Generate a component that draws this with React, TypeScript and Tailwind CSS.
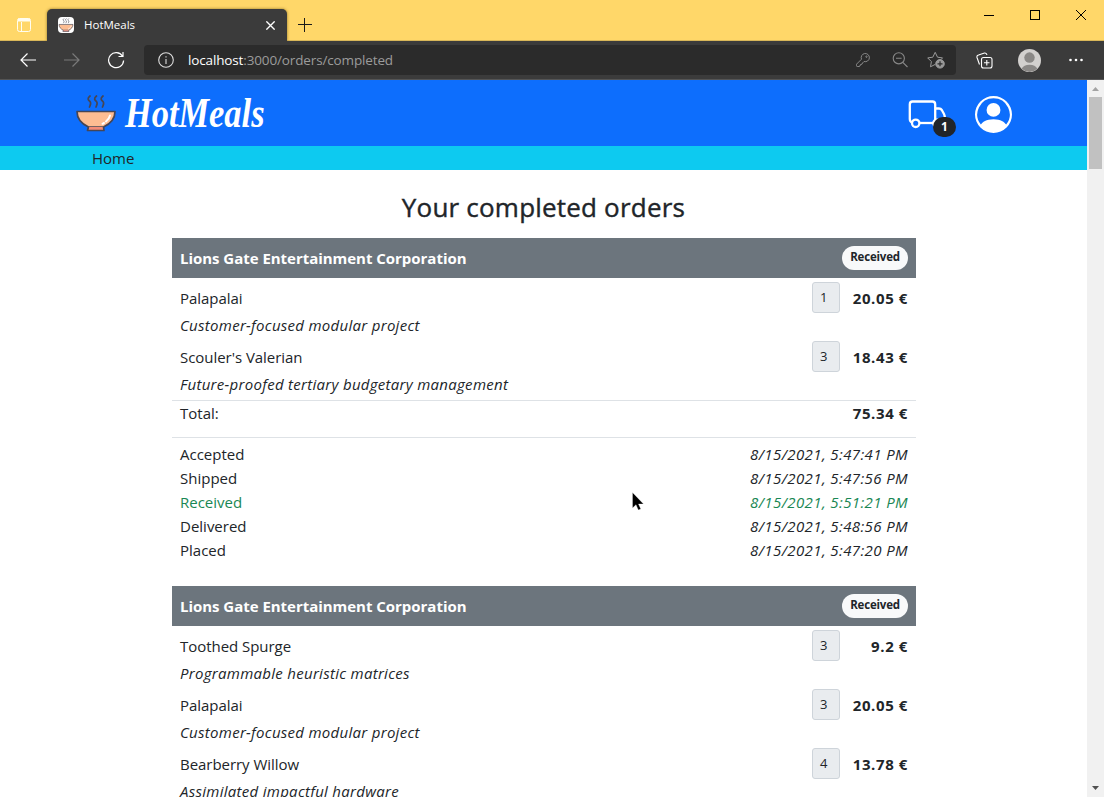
import React from "react";
import { BsPersonCircle } from "react-icons/bs";

type Item = { name: string; desc: string; qty: number; price: string };
type Step = { label: string; time: string; active?: boolean };
type Order = { items: Item[]; total?: string; steps?: Step[] };

const orders: Order[] = [
  {
    items: [
      { name: "Palapalai", desc: "Customer-focused modular project", qty: 1, price: "20.05 €" },
      { name: "Scouler's Valerian", desc: "Future-proofed tertiary budgetary management", qty: 3, price: "18.43 €" },
    ],
    total: "75.34 €",
    steps: [
      { label: "Accepted", time: "8/15/2021, 5:47:41 PM" },
      { label: "Shipped", time: "8/15/2021, 5:47:56 PM" },
      { label: "Received", time: "8/15/2021, 5:51:21 PM", active: true },
      { label: "Delivered", time: "8/15/2021, 5:48:56 PM" },
      { label: "Placed", time: "8/15/2021, 5:47:20 PM" },
    ],
  },
  {
    items: [
      { name: "Toothed Spurge", desc: "Programmable heuristic matrices", qty: 3, price: "9.2 €" },
      { name: "Palapalai", desc: "Customer-focused modular project", qty: 3, price: "20.05 €" },
      { name: "Bearberry Willow", desc: "Assimilated impactful hardware", qty: 4, price: "13.78 €" },
    ],
  },
];

function Bowl({ className }: { className: string }) {
  return (
    <svg viewBox="0 0 40 38" className={className} fill="none" stroke="#464655" strokeWidth="1.7" strokeLinejoin="round">
      <path d="M14 2c-3 2.500-2 4 0 5.500 1.500 1.500.5 3-.5 5.500M20.500 2c-3 2.500-2 4 0 5.500 1.500 1.500.5 3-.5 5.500M27 2c-3 2.500-2 4 0 5.500 1.500 1.500.5 3-.5 5.500" strokeLinecap="round" />
      <path d="M1 17.500h38c0 7-5 12.500-11.500 15.500H12.500C6 30 1 24.500 1 17.500Z" fill="#fdbd92" />
      <path d="M12.500 33l-1 3.500h16.500L27.500 33" fill="#f48c76" />
      <path d="M34 21.500c-.800 3-2 4.500-4 6M28 29l-1.500.8" stroke="#fff" strokeWidth="2" strokeLinecap="round" />
    </svg>
  );
}

function Truck({ className }: { className: string }) {
  return (
    <svg viewBox="0 0 38 36" className={className} fill="none" stroke="#fff" strokeWidth="2.300" strokeLinejoin="round">
      <path d="M4 27.500Q1.800 26.500 1.800 24V9.500Q1.800 6.500 4.500 6.500H24.500Q27.200 6.500 27.200 9.500V28.500" />
      <path d="M27.200 13.500H31Q32.800 13.500 33.800 15L36 19Q36.800 20.500 36.800 23V26Q36.800 28 34 28" />
      <path d="M12 28H27" />
      <circle cx="7.700" cy="28.300" r="3.700" />
      <circle cx="29" cy="28.300" r="3.700" />
    </svg>
  );
}

function TabStrip() {
  return (
    <div className="flex h-[41px] shrink-0 items-end border-b border-[#d9b759] bg-[#ffd769]">
      <svg viewBox="0 0 14 14" className="mb-[8px] ml-[17px] h-[14px] w-[14px]" fill="none" stroke="#fffdf0">
        <rect x=".5" y=".5" width="13" height="13" rx="2" />
        <path d="M4.500 4v9.500" />
        <path d="M1 2h12" strokeWidth="3" />
      </svg>
      <div className="-mb-px ml-4 flex h-8 w-[240px] items-center rounded-t-[5px] bg-[#3b3b3b] pl-[11px] shadow-[0_0_3px_rgba(90,70,10,0.7)]">
        <span className="flex h-4 w-4 items-center justify-center rounded bg-white">
          <Bowl className="h-[14px] w-4" />
        </span>
        <span className="ml-[10px] text-[11.5px] text-white">HotMeals</span>
        <svg viewBox="0 0 8 8" className="ml-auto mr-[12px] h-[9px] w-[9px]" stroke="#fff" strokeWidth="1.200">
          <path d="M.3.3l7.400 7.400M7.700.3.3 7.700" />
        </svg>
      </div>
      <svg viewBox="0 0 14 14" className="mb-[8px] ml-[11px] h-[14px] w-[14px]" stroke="#1a1a1a" shapeRendering="crispEdges">
        <path d="M0 6.500h14M6.500 0v14" />
      </svg>
      <div className="mb-[20px] ml-auto flex items-center pr-[18px]">
        <svg viewBox="0 0 10 10" className="mr-[36px] h-[10px] w-[10px]" stroke="#000" shapeRendering="crispEdges">
          <path d="M0 5.500h10" />
        </svg>
        <svg viewBox="0 0 10 10" className="mr-[36px] h-[10px] w-[10px]" fill="none" stroke="#000" shapeRendering="crispEdges">
          <rect x=".5" y=".5" width="9" height="9" />
        </svg>
        <svg viewBox="0 0 10 10" className="h-[10px] w-[10px]" stroke="#000">
          <path d="M0 0l10 10M10 0L0 10" />
        </svg>
      </div>
    </div>
  );
}

function Toolbar() {
  return (
    <div className="flex h-[39px] shrink-0 items-center border-b border-[#555] bg-[#3b3b3b] pl-5">
      <svg viewBox="0 0 16 14" className="h-[14px] w-4" fill="none" stroke="#fff" strokeWidth="1.200">
        <path d="M16 7H1M7.500.5 1 7l6.500 6.500" />
      </svg>
      <svg viewBox="0 0 16 14" className="ml-7 h-[14px] w-4" fill="none" stroke="#7a7a7a" strokeWidth="1.200">
        <path d="M0 7h15M8.500.5 15 7l-6.500 6.500" />
      </svg>
      <svg viewBox="0 0 18 18" className="ml-[27px] h-[18px] w-[18px]" fill="none" stroke="#fff" strokeWidth="1.200">
        <path d="M15.500 5.200A7.500 7.500 0 1 0 16.600 9.500M16 1v4.500h-4.500" />
      </svg>
      <div className="ml-[19px] flex h-[30px] w-[812px] items-center rounded bg-[#2b2b2b] pl-[14px] pr-[11px]">
        <svg viewBox="0 0 16 16" className="h-4 w-4" fill="none" stroke="#ddd" strokeWidth="1.100">
          <circle cx="8" cy="8" r="7.300" />
          <path d="M8 7v5M8 4.200v1.400" />
        </svg>
        <span className="ml-[14px] text-[13.500px] tracking-[-0.14px] text-[#9b9b9b]">
          <span className="text-white">localhost</span>:3000/orders/completed
        </span>
        <svg viewBox="0 0 14 14" className="ml-auto h-[14px] w-[14px]" fill="none" stroke="#888" strokeLinejoin="round">
          <path d="M5.500 6.200A4.100 4.100 0 1 1 8 8.500L6.500 10 6 11.200 4.500 11.500 4 13 3 13.500H1.200Q.5 13.500.5 12.700V11.200Z" />
          <circle cx="10.500" cy="3.700" r=".7" />
        </svg>
        <svg viewBox="0 0 16 16" className="ml-[22px] h-4 w-4" fill="none" stroke="#888" strokeWidth="1.100">
          <circle cx="6.800" cy="6.300" r="5.600" />
          <path d="M4 6.300h5.600M10.800 10.300l4.700 4.700" />
        </svg>
        <svg viewBox="0 0 18 18" className="ml-[19px] h-[18px] w-[18px]" fill="none" stroke="#999" strokeLinejoin="round">
          <path d="M8 13.500l-4.500 2.300.9-5.200L.7 6.900l5.100-.7L8.200 1.300l2.300 4.900 5.100.7-1 1" />
          <circle cx="13" cy="12.800" r="4.300" fill="#999" />
          <path d="M10.500 12.800h5M13 10.300v5" stroke="#2b2b2b" strokeWidth="1.200" />
        </svg>
      </div>
      <svg viewBox="0 0 17 17" className="ml-5 h-[17px] w-[17px]" fill="none" stroke="#fff" strokeWidth="1.100">
        <path d="M3.500 12.500 1 5.500Q.5 3.500 2.500 3L8.500 1Q10.500.6 11 3" />
        <rect x="5.500" y="5.500" width="10.500" height="10.500" rx="2" />
        <path d="M8 10.800h5.500M10.800 8v5.500" />
      </svg>
      <svg viewBox="0 0 22 22" className="ml-[25px] h-[23px] w-[23px]">
        <circle cx="11" cy="11" r="11" fill="#d2d0ce" />
        <circle cx="11" cy="8.200" r="5" fill="#8a8886" />
        <path d="M3.500 19a8 6 0 0 1 15 0A11 11 0 0 1 3.500 19Z" fill="#8a8886" />
      </svg>
      <svg viewBox="0 0 14 4" className="ml-[28px] h-1 w-[14px]" fill="#fff">
        <circle cx="1.500" cy="2" r="1.300" />
        <circle cx="7" cy="2" r="1.300" />
        <circle cx="12.500" cy="2" r="1.300" />
      </svg>
    </div>
  );
}

function OrderCard({ order }: { order: Order }) {
  return (
    <section className="mb-6 w-[744px]">
      <header className="flex h-10 items-center justify-between bg-[#6c757d] px-2">
        <span className="text-[15px] font-bold tracking-[-0.03px] text-white">Lions Gate Entertainment Corporation</span>
        <span className="flex h-6 w-[66px] items-center justify-center rounded-full bg-[#f8f9fa] pb-0.5 text-[11.500px] font-bold tracking-[-0.2px]">
          Received
        </span>
      </header>
      {order.items.map((it, i) => (
        <div key={i} className="px-2 pt-1">
          <div className="flex h-[31px] items-center">
            <span className="pt-0.5 tracking-[-0.04px]">{it.name}</span>
            <span className="ml-auto flex h-[31px] w-7 items-center rounded-[3px] border border-[#ced4da] bg-[#e9ecef] pl-[7px] text-[13px]">
              {it.qty}
            </span>
            <span className="w-[68px] pt-0.5 text-right font-bold tracking-[0.600px]">{it.price}</span>
          </div>
          <p className="h-6 leading-6 tracking-[0.290px] italic">{it.desc}</p>
        </div>
      ))}
      {order.total && (
        <div className="mt-1 flex h-[37px] justify-between border-t border-[#dee2e6] px-2 leading-6">
          <span>Total:</span>
          <span className="font-bold tracking-[0.600px]">{order.total}</span>
        </div>
      )}
      {order.steps && (
        <div className="border-t border-[#dee2e6] px-2 pt-1">
          {order.steps.map((s) => (
            <div key={s.label} className={s.active ? "flex h-6 items-center justify-between text-[#198754]" : "flex h-6 items-center justify-between"}>
              <span>{s.label}</span>
              <span className="tracking-[0.390px] italic">{s.time}</span>
            </div>
          ))}
        </div>
      )}
    </section>
  );
}

export default function App() {
  return (
    <div className="relative flex h-[797px] w-[1104px] flex-col overflow-hidden bg-white font-['Open_Sans','Noto_Sans',sans-serif] text-[#212529]">
      <TabStrip />
      <Toolbar />
      <div className="flex min-h-0 flex-1">
        <main className="w-[1087px] overflow-hidden">
          <div className="flex h-[66px] items-center bg-[#0d6efd] pl-[76px] pr-[75px]">
            <Bowl className="h-[38px] w-10" />
            <span className="ml-[9px] w-[180px] origin-left scale-x-[0.8] whitespace-nowrap font-['Liberation_Serif',serif] text-[43px] leading-9 font-bold text-white italic">
              HotMeals
            </span>
            <div className="relative ml-auto h-9 w-[38px]">
              <Truck className="h-9 w-[38px]" />
              <span className="absolute top-[22px] left-[25px] flex h-5 w-[23px] items-center justify-center rounded-full bg-[#212529] text-[12px] font-bold text-white">
                1
              </span>
            </div>
            <BsPersonCircle className="mt-0.5 ml-[29px] h-[37px] w-[37px] text-white" />
          </div>
          <nav className="h-6 bg-[#0dcaf0] pl-[92px] text-[15px] leading-6">Home</nav>
          <h1 className="mt-[19px] mb-[13px] h-9 text-center text-[26px] leading-9 font-medium tracking-[0.200px] [-webkit-text-stroke:0.400px_#212529]">
            Your completed orders
          </h1>
          <div className="ml-[172px] text-[15px]">
            {orders.map((o, i) => (
              <OrderCard key={i} order={o} />
            ))}
          </div>
        </main>
        <div className="flex w-[17px] flex-col items-center bg-[#f1f1f1]">
          <svg viewBox="0 0 17 17" className="h-[17px] w-[17px]" fill="#a3a3a3">
            <path d="M5 11h7L8.500 7Z" />
          </svg>
          <div className="h-[72px] w-[13px] bg-[#c1c1c1]" />
          <svg viewBox="0 0 17 17" className="mt-auto h-[17px] w-[17px]" fill="#505050">
            <path d="M5 6h7l-3.500 4Z" />
          </svg>
        </div>
      </div>
      <svg viewBox="0 0 12 19" className="absolute top-[492px] left-[632px] h-[19px] w-3">
        <path d="M.5.5v15.500l3.500-3.300 2.300 5.300 2.500-1-2.300-5h5Z" fill="#000" stroke="#fff" strokeWidth=".3" />
      </svg>
    </div>
  );
}
